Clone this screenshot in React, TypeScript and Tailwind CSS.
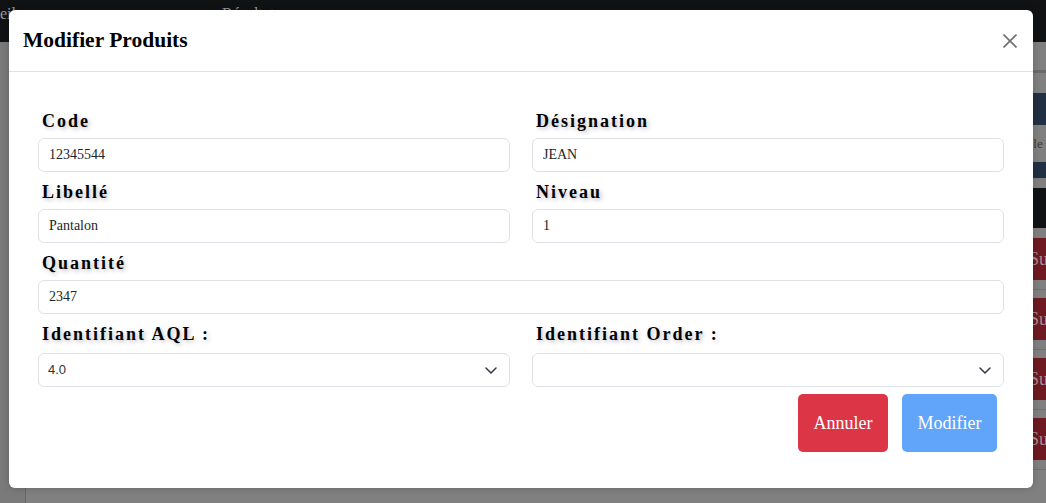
import React from "react";

const labelCls =
    "block pl-[4px] mb-[5px] text-[18px] leading-[24px] font-bold tracking-[2px] text-black [text-shadow:2px_2px_4px_rgba(0,0,0,0.25)]";
const inputCls =
    "w-full h-[34px] border border-[#dee2e6] rounded-[6px] px-[10px] text-[14px] text-[#212529] bg-white focus:outline-none font-['Liberation_Serif',serif]";

function Field({ label, value, wide }: { label: string; value: string; wide?: boolean }) {
    return (
        <div className={wide ? "col-span-2 flex flex-col" : "flex flex-col"}>
            <label className={labelCls}>{label}</label>
            <input type="text" defaultValue={value} className={inputCls} />
        </div>
    );
}

function SelectField({ label, value }: { label: string; value: string }) {
    return (
        <div className="flex flex-col">
            <label className={labelCls.replace("mb-[5px]", "mb-[7px]")}>{label}</label>
            <div className="relative">
                <select
                    defaultValue={value}
                    className="w-full h-[34px] appearance-none border border-[#dee2e6] rounded-[6px] pl-[9px] pr-[36px] text-[13px] text-[#333] bg-white focus:outline-none font-['Liberation_Sans',sans-serif]"
                >
                    {value ? <option value={value}>{value}</option> : <option value=""></option>}
                </select>
                <svg
                    className="absolute right-[13px] top-[14px] w-[12px] h-[7px] pointer-events-none"
                    viewBox="0 0 12 7"
                    fill="none"
                    stroke="#343a40"
                    strokeWidth="1.5"
                    strokeLinecap="round"
                    strokeLinejoin="round"
                >
                    <path d="M1 1l5 5 5-5" />
                </svg>
            </div>
        </div>
    );
}

function RedRow({ first }: { first?: boolean }) {
    return (
        <div className={first ? "pt-[10px] pb-[9px] border-b border-[#707070]" : "pt-[8px] pb-[9px] border-b border-[#707070]"}>
            <div className="ml-[1000px] w-[90px] h-[42px] bg-[#6f1a22] pl-[3px] flex items-center text-[18px] text-[#a88c8e]">
                Supprimer
            </div>
        </div>
    );
}

export default function App() {
    return (
        <div className="relative w-[1046px] h-[503px] overflow-hidden bg-[#808080] font-['Liberation_Serif',serif]">
            {/* page behind the backdrop */}
            <nav className="h-[42px] bg-[#111214] flex items-start pt-[4px] text-[16px] leading-[20px] text-[#9c9c9c]">
                <span>eil</span>
                <span className="ml-[206px]">Résultats</span>
            </nav>
            <div className="flex h-[461px]">
                <div className="w-[26px] shrink-0 bg-[#7a7a7a] border-r border-[#666]" />
                <div className="flex-1 flex flex-col">
                    <div className="h-[28px]" />
                    <div className="h-[3px] bg-[#6a6a6a]" />
                    <div className="h-[20px]" />
                    <div className="h-[32px] bg-[#223043]" />
                    <div className="h-[37px] flex items-center pl-[977px] text-[13px] text-[#3a3a3a]">Modèle</div>
                    <div className="h-[16px] bg-[#223043]" />
                    <div className="h-[10px]" />
                    <div className="h-[40px] bg-[#111214]" />
                    <RedRow first />
                    <RedRow />
                    <RedRow />
                    <RedRow />
                </div>
            </div>

            {/* modal */}
            <div className="absolute left-[9px] top-[10px] w-[1024px] h-[478px] bg-white rounded-[6px] shadow-[0_0_8px_rgba(0,0,0,0.2)] flex flex-col">
                <div className="h-[62px] border-b border-[#dee2e6] flex items-center justify-between pl-[14px] pr-[16px]">
                    <h5 className="text-[21.5px] font-bold text-black">Modifier Produits</h5>
                    <svg width="14" height="14" viewBox="0 0 14 14" stroke="#6f6f6f" strokeWidth="1.6" fill="none">
                        <path d="M0.5 0.5l13 13M13.5 0.5l-13 13" />
                    </svg>
                </div>
                <div className="px-[29px] pt-[37px]">
                    <div className="grid grid-cols-2 gap-x-[22px] gap-y-[8px]">
                        <Field label="Code" value="12345544" />
                        <Field label="Désignation" value="JEAN" />
                        <Field label="Libellé" value="Pantalon" />
                        <Field label="Niveau" value="1" />
                        <Field label="Quantité" value="2347" wide />
                        <SelectField label="Identifiant AQL :" value="4.0" />
                        <SelectField label="Identifiant Order :" value="" />
                    </div>
                    <div className="flex justify-end gap-[14px] pr-[7px] mt-[7px]">
                        <button className="h-[58px] px-[15.5px] rounded-[5px] bg-[#dc3545] text-white text-[18px]">
                            Annuler
                        </button>
                        <button className="h-[58px] px-[15.5px] rounded-[5px] bg-[#60a5fa] text-white text-[18px]">
                            Modifier
                        </button>
                    </div>
                </div>
            </div>
        </div>
    );
}
